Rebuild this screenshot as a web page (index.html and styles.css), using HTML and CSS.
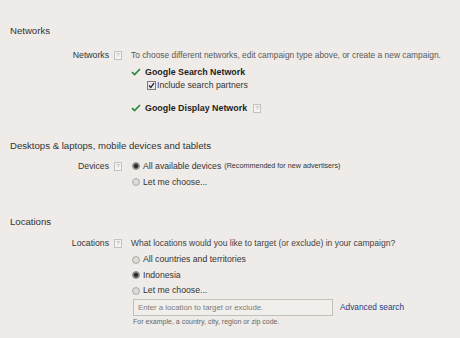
FILE: index.html
```html
<!DOCTYPE html>
<html>
<head>
<meta charset="utf-8">
<link rel="stylesheet" href="styles.css">
</head>
<body>
<div class="page">
  <h2 class="heading h-networks">Networks</h2>
  <div class="row r-networks">
    <div class="label">Networks</div>
    <div class="help"><span class="q">?</span></div>
    <div class="content">
      <div class="desc">To choose different networks, edit campaign type above, or create a new campaign.</div>
      <div class="check c1"><svg class="tick" width="10" height="8" viewBox="0 0 10 8"><path d="M1 4.2 L3.6 6.6 L9 1" fill="none" stroke="#2e8b3e" stroke-width="1.8"/></svg><b>Google Search Network</b></div>
      <div class="sub"><span class="box"><svg width="7" height="7" viewBox="0 0 7 7"><path d="M1 3.5 L2.8 5.5 L6 1.2" fill="none" stroke="#223" stroke-width="1.3"/></svg></span>Include search partners</div>
      <div class="check c2"><svg class="tick" width="10" height="8" viewBox="0 0 10 8"><path d="M1 4.2 L3.6 6.6 L9 1" fill="none" stroke="#2e8b3e" stroke-width="1.8"/></svg><b>Google Display Network</b><span class="q q-inline">?</span></div>
    </div>
  </div>

  <h2 class="heading h-devices">Desktops &amp; laptops, mobile devices and tablets</h2>
  <div class="row r-devices">
    <div class="label">Devices</div>
    <div class="help"><span class="q">?</span></div>
    <div class="content">
      <div class="opt"><span class="radio on"></span>All available devices <small>(Recommended for new advertisers)</small></div>
      <div class="opt"><span class="radio"></span>Let me choose...</div>
    </div>
  </div>

  <h2 class="heading h-locations">Locations</h2>
  <div class="row r-locations">
    <div class="label">Locations</div>
    <div class="help"><span class="q">?</span></div>
    <div class="content">
      <div class="desc dark">What locations would you like to target (or exclude) in your campaign?</div>
      <div class="opt o-loc o-first"><span class="radio"></span>All countries and territories</div>
      <div class="opt o-loc"><span class="radio on"></span>Indonesia</div>
      <div class="opt o-loc"><span class="radio"></span>Let me choose...</div>
      <div class="search">
        <div class="input">Enter a location to target or exclude.</div>
        <a class="adv">Advanced search</a>
      </div>
      <div class="hint">For example, a country, city, region or zip code.</div>
    </div>
  </div>
</div>
</body>
</html>
```

FILE: styles.css
```css
html, body {
  margin: 0;
  padding: 0;
  background: #eeebe8;
}
body {
  font-family: "Liberation Sans", Arial, sans-serif;
  color: #333;
  font-size: 8.7px;
}
.page {
  padding: 23px 0 0 10px;
}
.heading {
  margin: 0;
  font-weight: normal;
  font-size: 9.6px;
  line-height: 16px;
  color: #333;
}
.h-devices { margin-top: 23px; }
.h-locations { margin-top: 24px; }

.row {
  display: grid;
  grid-template-columns: 99px 22px 1fr;
}
.r-networks { margin-top: 8px; }
.r-devices { margin-top: 4px; }
.r-locations { margin-top: 5px; }

.label {
  text-align: right;
  line-height: 16px;
  color: #333;
}
.help {
  padding-left: 5px;
  padding-top: 4px;
}
.q {
  display: inline-block;
  box-sizing: border-box;
  width: 8px;
  height: 9px;
  border: 1px solid #c4c2bf;
  background: #f4f3f1;
  color: #aaa;
  font-size: 6px;
  line-height: 7px;
  text-align: center;
  vertical-align: top;
}
.content {
  display: flex;
  flex-direction: column;
  white-space: nowrap;
}
.desc {
  line-height: 16px;
  font-size: 8.4px;
  color: #5a5a5a;
}
.desc.dark { color: #444; font-size: 8.5px; }
.check {
  display: flex;
  align-items: center;
  line-height: 14px;
  color: #1e1e1e;
}
.check b { font-weight: bold; font-size: 8.9px; }
.c1 { margin-top: 2px; }
.c2 { margin-top: 10px; }
.tick {
  margin: 0 4px 0 0;
  flex: none;
}
.q-inline { margin-left: 6px; vertical-align: middle; }
.sub {
  display: flex;
  align-items: center;
  line-height: 12px;
  padding-left: 16px;
  color: #333;
}
.box {
  box-sizing: border-box;
  width: 9px;
  height: 9px;
  border: 1px solid #7d7d7d;
  background: #e8e8ee;
  margin-right: 1px;
  display: flex;
  align-items: center;
  justify-content: center;
}
.opt {
  display: flex;
  align-items: center;
  line-height: 16px;
  margin-top: 0;
  color: #333;
}
.o-loc { line-height: 15.5px; }
.o-first { margin-top: 1px; }
.opt small { font-size: 7.2px; margin-left: 3px; color: #333; }
.radio {
  box-sizing: border-box;
  width: 8px;
  height: 8px;
  border-radius: 50%;
  border: 1px solid #b0aeab;
  background: radial-gradient(circle at 50% 50%, #e6e4e1 0, #cfcdca 100%);
  margin: 0 3px 0 1px;
  flex: none;
}
.radio.on {
  border-color: #8a8a8a;
  background: radial-gradient(circle at 50% 50%, #222 0, #333 40%, #8a8a8a 65%, #c8c8c8 100%);
}
.search {
  display: flex;
  align-items: center;
  margin-top: 0;
}
.input {
  box-sizing: border-box;
  width: 200px;
  height: 17px;
  margin-left: 2px;
  border: 1px solid #c3c0bc;
  background: #f1efec;
  color: #7a7a7a;
  font-size: 7.8px;
  line-height: 15px;
  padding-left: 4px;
}
.adv {
  margin-left: 7px;
  color: #1f3c84;
  font-size: 8.3px;
}
.hint {
  margin-top: 1px;
  margin-left: 2px;
  font-size: 7px;
  line-height: 10px;
  color: #666;
}
```
